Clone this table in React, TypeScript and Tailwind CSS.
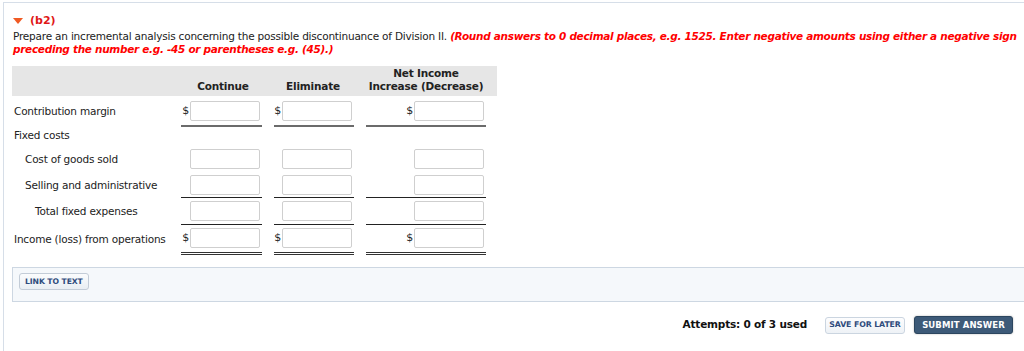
import React from "react";

type Cell = { dollar?: boolean; line?: "single" | "thick" | "double" | "none" };

const rows: { label: string; indent: string; cells: Cell; rowClass: string }[] = [
  { label: "Contribution margin", indent: "pl-[2px]", cells: { dollar: true, line: "thick" }, rowClass: "pt-[5px] pb-[4px]" },
  { label: "Cost of goods sold", indent: "pl-[13px]", cells: { line: "none" }, rowClass: "pt-[5px] pb-[2px]" },
  { label: "Selling and administrative", indent: "pl-[13px]", cells: { line: "single" }, rowClass: "pt-[3px] pb-[2px]" },
  { label: "Total fixed expenses", indent: "pl-[23px]", cells: { line: "single" }, rowClass: "pt-[3px] pb-[3px]" },
  { label: "Income (loss) from operations", indent: "pl-[2px]", cells: { dollar: true, line: "double" }, rowClass: "pt-[3px] pb-[4px]" },
];

const lineClass = {
  single: "border-b border-[#222]",
  thick: "border-b-2 border-[#6b6b6b]",
  double: "border-b-[3px] border-double border-[#333]",
  none: "border-b border-transparent",
};

function AmountBox({ width, offset, cell, rowClass }: { width: string; offset: string; cell: Cell; rowClass: string }) {
  return (
    <div className={`${offset} ${width} ${rowClass} ${lineClass[cell.line ?? "none"]} flex items-center justify-end pr-[2px]`}>
      {cell.dollar && <span className="text-[11px] mr-[1px] text-[#222]">$</span>}
      <input
        type="text"
        className="w-[70px] h-[20px] border border-[#cfcfcf] rounded-[2px] bg-white outline-none"
      />
    </div>
  );
}

export default function App() {
  return (
    <div className="w-[1024px] h-[351px] bg-white overflow-hidden" style={{ fontFamily: '"DejaVu Sans", Verdana, sans-serif' }}>
      <div className="mt-[2px] ml-[3px] h-[349px] border-t border-l border-[#d6dee8] pl-[8px] pt-[12px] text-[#222] text-[10.5px] tracking-[-0.2px]">
        {/* heading */}
        <div className="flex items-center gap-[7px] pl-[1px] h-[12px]">
          <svg width="10" height="6" viewBox="0 0 10 6">
            <polygon points="0,0 10,0 5,6" fill="#f05a23" />
          </svg>
          <span className="text-[11px] font-bold text-[#e01818] tracking-normal">(b2)</span>
        </div>
        <p className="mt-[3px] pl-[1px] leading-[13px] whitespace-nowrap">
          Prepare an incremental analysis concerning the possible discontinuance of Division II.{" "}
          <span className="font-bold italic text-[#f00] tracking-[-0.3px]">
            (Round answers to 0 decimal places, e.g. 1525. Enter negative amounts using either a negative sign
          </span>
          <br />
          <span className="font-bold italic text-[#f00] tracking-[-0.3px]">
            preceding the number e.g. -45 or parentheses e.g. (45).)
          </span>
        </p>

        {/* incremental analysis table */}
        <div className="mt-[10px] w-[485px]">
          <div className="grid grid-cols-[166px_88px_92px_139px] bg-[#e6e6e6] h-[30px] font-bold leading-[13px]">
            <div />
            <div className="flex items-end justify-center pb-[3px] pl-[2px]">Continue</div>
            <div className="flex items-end justify-center pb-[3px] pl-[2px]">Eliminate</div>
            <div className="flex flex-col items-center justify-end pb-[3px] pr-[3px] text-center">
              <span>Net Income</span>
              <span>Increase (Decrease)</span>
            </div>
          </div>

          {rows.map((r, i) => (
            <React.Fragment key={r.label}>
              <div className="grid grid-cols-[166px_88px_92px_139px]">
                <div className={`flex items-center whitespace-nowrap ${r.indent} ${r.rowClass}`}>{r.label}</div>
                <AmountBox width="w-[81px]" offset="ml-[3px]" cell={r.cells} rowClass={r.rowClass} />
                <AmountBox width="w-[80px]" offset="ml-[8px]" cell={r.cells} rowClass={r.rowClass} />
                <AmountBox width="w-[120px]" offset="ml-[8px]" cell={r.cells} rowClass={r.rowClass} />
              </div>
              {i === 0 && <div className="h-[17px] flex items-center pl-[2px]">Fixed costs</div>}
            </React.Fragment>
          ))}
        </div>

        {/* link to text panel */}
        <div className="mt-[12px] h-[35px] bg-[#f5f8fb] border border-r-0 border-[#cdd7e2] px-[6px] pt-[5px]">
          <button className="h-[17px] px-[5px] rounded-[3px] border border-[#c3ccd7] bg-gradient-to-b from-[#fbfcfd] to-[#e9eef3] text-[7.7px] font-bold text-[#2e4b7c] leading-none tracking-[-0.1px]">
            LINK TO TEXT
          </button>
        </div>

        {/* attempts + actions */}
        <div className="flex items-center justify-end pr-[11px] mt-[14px]">
          <span className="font-bold text-[#111] mr-[18px]">Attempts: 0 of 3 used</span>
          <button className="h-[17px] w-[80px] rounded-[3px] border border-[#cbd5e0] bg-gradient-to-b from-[#fdfdfe] to-[#eef2f6] text-[7.8px] font-bold text-[#2e4b7c] leading-none tracking-[-0.1px] mr-[9px]">
            SAVE FOR LATER
          </button>
          <button className="h-[18px] w-[99px] rounded-[3px] border border-[#2c465f] bg-[#3d5a78] text-[8.5px] font-bold text-white leading-none tracking-[0.1px] shadow-[0_0_2px_rgba(0,0,0,0.3)]">
            SUBMIT ANSWER
          </button>
        </div>
      </div>
    </div>
  );
}
